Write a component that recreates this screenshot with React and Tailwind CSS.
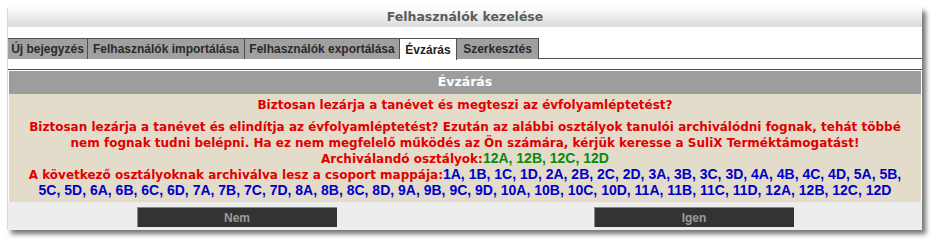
const tabs = [
  { label: 'Új bejegyzés', width: 'w-[80px]' },
  { label: 'Felhasználók importálása', width: 'w-[157px]' },
  { label: 'Felhasználók exportálása', width: 'w-[155px]' },
  { label: 'Évzárás', width: 'w-[57px]', active: true },
  { label: 'Szerkesztés', width: 'w-[82px]' },
];

const archived = ['12A', '12B', '12C', '12D'];

const firstRow = ['1A', '1B', '1C', '1D', '2A', '2B', '2C', '2D', '3A', '3B', '3C', '3D', '4A', '4B', '4C', '4D', '5A', '5B'];
const secondRow = ['5C', '5D', '6A', '6B', '6C', '6D', '7A', '7B', '7C', '7D', '8A', '8B', '8C', '8D', '9A', '9B', '9C', '9D', '10A', '10B', '10C', '10D', '11A', '11B', '11C', '11D', '12A', '12B', '12C', '12D'];

export default function App() {
  return (
    <main className="min-h-screen bg-white pt-[7px] pl-[7px]">
      <div className="w-[915px] h-[223px] rounded-t-[3px] bg-white border-l border-[#d8d8d8] shadow-[4px_4px_5px_rgba(0,0,0,0.55)] flex flex-col">
        <header className="h-[20px] shrink-0 rounded-t-[3px] bg-gradient-to-b from-white to-[#dadada] flex items-center justify-center">
          <h1 className="font-['DejaVu_Sans',sans-serif] font-bold text-[12.5px] text-[#5c5c5c] leading-none">
            Felhasználók kezelése
          </h1>
        </header>

        <nav className="mt-[11px] h-[21px] shrink-0 flex border-b border-[#4b5151]">
          {tabs.map((tab) => (
            <div
              key={tab.label}
              className={
                tab.active
                  ? `${tab.width} h-[22px] -mb-px flex items-center justify-center border-t border-r border-[#4b5151] bg-white font-['Liberation_Sans',Arial,sans-serif] font-bold text-[12px] text-[#222]`
                  : `${tab.width} h-[21px] flex items-center justify-center border-t border-r border-[#4b5151] bg-[#a0a0a0] font-['Liberation_Sans',Arial,sans-serif] font-bold text-[12px] text-[#2a2a2a]`
              }
            >
              {tab.label}
            </div>
          ))}
        </nav>

        <section className="mt-[10px] border-t border-[#4b5151] pt-px flex-1 flex flex-col">
          <div className="mx-px h-[23px] shrink-0 bg-[#9d9d9d] flex items-center justify-center font-['DejaVu_Sans',sans-serif] font-bold text-[12.5px] text-white">
            Évzárás
          </div>

          <div className="mx-px shrink-0 bg-[#e4dccb] pt-[3px] pb-[3px] text-center font-['DejaVu_Sans',sans-serif] font-bold text-[12px] leading-[16px] text-[#e10000]">
            <p className="h-[17px] leading-[17px]">Biztosan lezárja a tanévet és megteszi az évfolyamléptetést?</p>
            <p className="mt-[5px] px-[6px]">
              Biztosan lezárja a tanévet és elindítja az évfolyamléptetést? Ezután az alábbi osztályok tanulói archiválódni fognak, tehát többé
              <br />
              nem fognak tudni belépni. Ha ez nem megfelelő működés az Ön számára, kérjük keresse a SuliX Terméktámogatást!
              <br />
              Archiválandó osztályok:
              <span className="font-['Liberation_Sans',Arial,sans-serif] text-[14px] leading-[12px] text-[#0a8a0a]">{archived.join(', ')}</span>
              <br />
              A következő osztályoknak archiválva lesz a csoport mappája:
              <span className="font-['Liberation_Sans',Arial,sans-serif] text-[14px] leading-[12px] text-[#0000c8]">
                {firstRow.join(', ')},
                <br />
                {secondRow.join(', ')}
              </span>
            </p>
          </div>

          <div className="flex-1 bg-[#ededed] grid grid-cols-2 items-start pt-[5px]">
            <div className="flex justify-center">
              <button className="w-[200px] h-[20px] bg-[#333333] border-l border-t border-[#8a8a8a] font-['Liberation_Sans',Arial,sans-serif] font-bold text-[12px] text-[#9a9a9a]">
                Nem
              </button>
            </div>
            <div className="flex justify-center">
              <button className="w-[200px] h-[20px] bg-[#333333] border-l border-t border-[#8a8a8a] font-['Liberation_Sans',Arial,sans-serif] font-bold text-[12px] text-[#9a9a9a]">
                Igen
              </button>
            </div>
          </div>
        </section>
      </div>
    </main>
  );
}
